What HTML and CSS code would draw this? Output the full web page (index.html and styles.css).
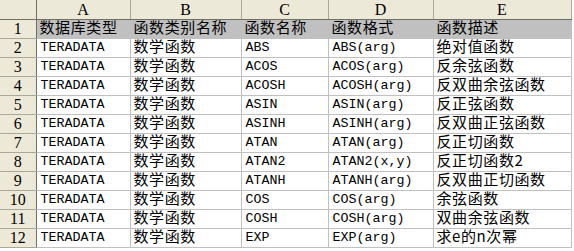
FILE: index.html
```html
<!DOCTYPE html>
<html lang="zh-cn">
<head>
    <meta charset="UTF-8">
    <title>函数列表</title>
    <link rel="stylesheet" href="styles.css">
</head>
<body>
    <table class="sheet">
        <colgroup>
            <col class="c-row">
            <col class="c-a">
            <col class="c-b">
            <col class="c-c">
            <col class="c-d">
            <col class="c-e">
        </colgroup>
        <tr class="col-head">
            <th></th><th>A</th><th>B</th><th>C</th><th>D</th><th>E</th>
        </tr>
        <tr class="title-row">
            <th>1</th><td>数据库类型</td><td>函数类别名称</td><td>函数名称</td><td>函数格式</td><td>函数描述</td>
        </tr>
        <tr>
            <th>2</th><td class="en">TERADATA</td><td>数学函数</td><td class="en">ABS</td><td class="en">ABS(arg)</td><td>绝对值函数</td>
        </tr>
        <tr>
            <th>3</th><td class="en">TERADATA</td><td>数学函数</td><td class="en">ACOS</td><td class="en">ACOS(arg)</td><td>反余弦函数</td>
        </tr>
        <tr>
            <th>4</th><td class="en">TERADATA</td><td>数学函数</td><td class="en">ACOSH</td><td class="en">ACOSH(arg)</td><td>反双曲余弦函数</td>
        </tr>
        <tr>
            <th>5</th><td class="en">TERADATA</td><td>数学函数</td><td class="en">ASIN</td><td class="en">ASIN(arg)</td><td>反正弦函数</td>
        </tr>
        <tr>
            <th>6</th><td class="en">TERADATA</td><td>数学函数</td><td class="en">ASINH</td><td class="en">ASINH(arg)</td><td>反双曲正弦函数</td>
        </tr>
        <tr>
            <th>7</th><td class="en">TERADATA</td><td>数学函数</td><td class="en">ATAN</td><td class="en">ATAN(arg)</td><td>反正切函数</td>
        </tr>
        <tr>
            <th>8</th><td class="en">TERADATA</td><td>数学函数</td><td class="en">ATAN2</td><td class="en">ATAN2(x,y)</td><td>反正切函数2</td>
        </tr>
        <tr>
            <th>9</th><td class="en">TERADATA</td><td>数学函数</td><td class="en">ATANH</td><td class="en">ATANH(arg)</td><td>反双曲正切函数</td>
        </tr>
        <tr>
            <th>10</th><td class="en">TERADATA</td><td>数学函数</td><td class="en">COS</td><td class="en">COS(arg)</td><td>余弦函数</td>
        </tr>
        <tr>
            <th>11</th><td class="en">TERADATA</td><td>数学函数</td><td class="en">COSH</td><td class="en">COSH(arg)</td><td>双曲余弦函数</td>
        </tr>
        <tr>
            <th>12</th><td class="en">TERADATA</td><td>数学函数</td><td class="en">EXP</td><td class="en">EXP(arg)</td><td>求e的n次幂</td>
        </tr>
    </table>
</body>
</html>
```
FILE: styles.css
```css
body {
    margin: 0;
    background-color: #fff;
}
.sheet {
    border-collapse: collapse;
    table-layout: fixed;
    width: 571px;
    font-family: "Noto Sans CJK SC", sans-serif;
    font-size: 15px;
    color: #000;
}
.c-row { width: 36px; }
.c-a { width: 94px; }
.c-b { width: 111px; }
.c-c { width: 87px; }
.c-d { width: 105px; }
.c-e { width: 138px; }
.sheet td,
.sheet th {
    height: 14px;
    padding: 0 0 4px 3px;
    border: 1px solid #c0c0c0;
    white-space: nowrap;
    line-height: 14px;
    text-align: left;
    font-weight: normal;
    letter-spacing: 0.6px;
}
.sheet th {
    background-color: #ece9d8; /* cabeçalho bege */
    border-color: #aca899;
    text-align: center;
    padding: 2px 0 2px 0;
    font-family: "Liberation Serif", serif;
    font-size: 16px;
    letter-spacing: 0;
}
.sheet tr th:first-child {
    border-left: none;
    border-right-color: #716f64;
}
.col-head th {
    height: 15px;
    border-top: none;
    border-bottom-color: #716f64;
}
.title-row td {
    background-color: #c0c0c0;
}
.sheet td.en {
    font-family: "Liberation Mono", monospace;
    font-size: 13.33px;
    padding: 2px 0 2px 4px;
    letter-spacing: 0;
}
```
